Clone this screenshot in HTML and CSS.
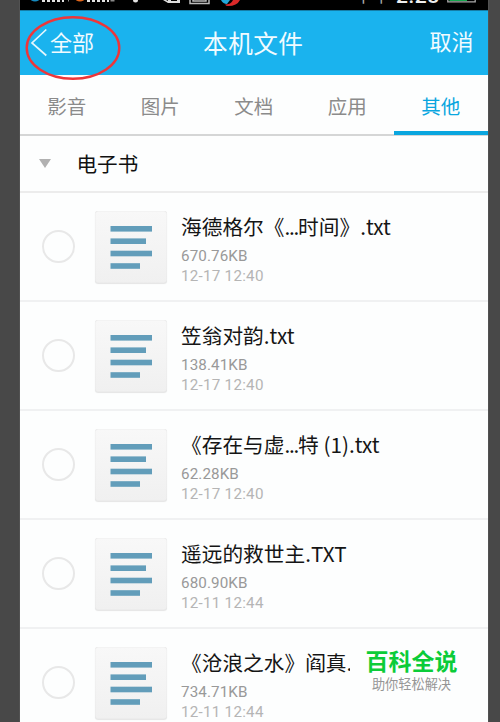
FILE: index.html
```html
<!DOCTYPE html>
<html lang="zh-CN">
<head>
<meta charset="utf-8">
<title>本机文件</title>
<link rel="stylesheet" href="styles.css">
</head>
<body>
<svg class="defs" width="0" height="0" aria-hidden="true">
  <symbol id="doc" viewBox="0 0 72 72">
    <g fill="#629dba"><rect x="15.500" y="15" width="41.500" height="5.600"/><rect x="15.500" y="27.400" width="35.500" height="5.600"/><rect x="15.500" y="39.700" width="41.500" height="5.600"/><rect x="15.500" y="52.200" width="29.500" height="5.600"/></g>
  </symbol>
</svg>
<main class="phone">
  <div class="status">
    <svg class="status-icons" width="230" height="10" viewBox="20 0 230 10">
      <ellipse cx="35" cy="-2" rx="5" ry="3.600" fill="#168ac0"/>
      <ellipse cx="80" cy="-2" rx="5" ry="3.600" fill="#e2661b"/>
      <g fill="#e4e4e4"><path d="M42 0h3v2h-3zM47 0h3v2h-3zM52 0h3v2h-3zM57 0h3v2h-3zM62 0h2v2h-2zM87 0h3v2h-3zM92 0h3v2h-3zM97 0h3v2h-3zM102 0h3v2h-3zM107 0h2v2h-2z"/><path d="M68 0h1v1.500h-1zM110.500 0h4v1.600h-4z" fill="#888"/><circle cx="135.500" cy="0" r="2.500"/></g>
      <path d="M163 0l5 3h12V0h-3v1h-6V0h-3v1l-2-1z" fill="#ddd"/>
      <path d="M190 0v3.500h19V0M193 0v1h13V0" fill="none" stroke="#bbb" stroke-width="1.500"/>
      <path d="M221 0h9l-3 4q-4 0-6-4z" fill="#23a8da"/>
      <path d="M233 0h7q-3 6-12 6-2 0-3-1.500 6 0 8-4.500z" fill="#db2929"/>
    </svg>
    <span class="meridiem">下午</span><span class="time">2:28</span>
    <svg class="battery" width="30" height="10" viewBox="0 0 30 10"><path d="M.8 0v1.800h27.400V0" fill="none" stroke="#aaa" stroke-width="1.300"/><path d="M2.500 0h17.500v1h-17.500z" fill="#12a64c"/></svg>
  </div>
  <header class="bar">
    <div class="back"><svg width="18" height="30" viewBox="0 0 18 30"><path d="M16.300 1.500L2 15l14.300 12.500" fill="none" stroke="#e4f6fd" stroke-width="1.700"/></svg><span>全部</span></div>
    <h1>本机文件</h1>
    <span class="cancel">取消</span>
    <svg class="ring" width="98" height="66" viewBox="0 0 98 66"><ellipse cx="49" cy="33" rx="46.300" ry="30.800" fill="none" stroke="#ee3639" stroke-width="2.400"/></svg>
  </header>
  <nav class="tabs"><span>影音</span><span>图片</span><span>文档</span><span>应用</span><span class="active">其他</span></nav>
  <div class="section"><i class="caret"></i><span>电子书</span></div>
  <ul class="files">
    <li><i class="radio"></i><svg class="doc"><use href="#doc"/></svg><div class="info"><b>海德格尔《<i class="dots">...</i>时间》.txt</b><span class="size">670.76KB</span><time>12-17 12:40</time></div></li>
    <li><i class="radio"></i><svg class="doc"><use href="#doc"/></svg><div class="info"><b>笠翁对韵.txt</b><span class="size">138.41KB</span><time>12-17 12:40</time></div></li>
    <li><i class="radio"></i><svg class="doc"><use href="#doc"/></svg><div class="info"><b>《存在与虚<i class="dots">...</i>特 (1).txt</b><span class="size">62.28KB</span><time>12-17 12:40</time></div></li>
    <li><i class="radio"></i><svg class="doc"><use href="#doc"/></svg><div class="info"><b>遥远的救世主.TXT</b><span class="size">680.90KB</span><time>12-11 12:44</time></div></li>
    <li><i class="radio"></i><svg class="doc"><use href="#doc"/></svg><div class="info"><b>《沧浪之水》阎真.</b><span class="size">734.71KB</span><time>12-11 12:44</time></div></li>
  </ul>
  <aside class="mark"><strong>百科全说</strong><span>助你轻松解决</span></aside>
</main>
</body>
</html>
```

FILE: styles.css
```css
* { box-sizing: border-box; }
body {
  margin: 0;
  height: 722px;
  overflow: hidden;
  background: #484848;
  font-family: Roboto, "Noto Sans CJK SC", sans-serif;
}
.defs { position: absolute; }
.phone {
  position: relative;
  width: 467.5px;
  height: 722px;
  margin-left: 20px;
  overflow: hidden;
  background: #fdfefe;
  box-shadow: 0 0 1px #888;
}
.status {
  display: flex;
  height: 10px;
  overflow: hidden;
  background: #000;
  color: #eee;
}
.status svg { flex: none; }
.meridiem {
  margin-left: 105px;
  margin-top: -17px;
  width: 40px;
  font-size: 17.5px;
  line-height: 26px;
  color: #aaa;
}
.time {
  width: 52px;
  margin-left: 1px;
  margin-top: -16px;
  font-size: 21px;
  line-height: 24px;
  letter-spacing: 0.6px;
  font-weight: 500;
}
.battery { margin-left: -1px; }
.bar {
  position: relative;
  display: grid;
  grid-template-columns: 1fr auto 1fr;
  align-items: center;
  height: 65px;
  padding: 0 14px 0 10px;
  background: #1ab3ee;
  border-top: 1px solid #157da7;
  color: #f1fbff;
}
.back { display: flex; align-items: center; gap: 2px; font-size: 22px; }
.back span { margin-top: -5px; }
.bar h1 { margin: -3px 0 0 3px; font-size: 24.7px; font-weight: 400; letter-spacing: 0.4px; }
.cancel { justify-self: end; font-size: 22px; margin-top: -6px; }
.ring { position: absolute; left: 3.5px; top: 4px; z-index: 2; }
.tabs {
  display: grid;
  grid-template-columns: repeat(5, 1fr);
  height: 61px;
  border-bottom: 2px solid #d5d6d6;
  font-size: 19.5px;
  color: #8b8b8b;
}
.tabs span { line-height: 65px; height: 60px; text-align: center; }
.tabs .active { color: #0aa6df; border-bottom: 4px solid #0aa6df; }
.section {
  display: flex;
  align-items: center;
  gap: 26px;
  height: 57px;
  padding-left: 18.5px;
  border-bottom: 2px solid #ececec;
  font-size: 20.6px;
  color: #111;
}
.section span { margin-top: -2px; }
.caret { border: 6.5px solid transparent; border-top: 9px solid #b1b1b1; border-bottom: 0; }
.files { margin: 0; padding: 0; list-style: none; }
.files li {
  display: flex;
  align-items: flex-start;
  height: 109.1px;
  padding: 18px 0 0 22px;
  border-bottom: 2px solid #f0f1f2;
}
.radio {
  width: 33px;
  height: 33px;
  margin: 19px 20px 0 0;
  border: 2px solid #e8e8e8;
  border-radius: 50%;
}
.doc {
  width: 72px;
  height: 72px;
  margin-right: 14px;
  border-radius: 3px;
  background: linear-gradient(#f8f8f8, #f0f0f0);
  box-shadow: inset 0 0 1px #ccc, 0 1px 1px #e5e5e5;
}
.info { display: flex; flex-direction: column; white-space: nowrap; }
.info b { font: 400 20.7px/30px "Noto Sans CJK SC", sans-serif; color: #151515; height: 35px; }
.dots { font-style: normal; letter-spacing: -1.2px; }
.size, .info time { font-size: 15.2px; line-height: 20px; letter-spacing: 0.1px; }
.size { color: #999; }
.info time { color: #b5b5b5; letter-spacing: 0.25px; }
.mark {
  position: absolute;
  left: 330px;
  top: 643px;
  width: 123px;
  height: 56px;
  display: flex;
  flex-direction: column;
  align-items: center;
  background: #fdfefe;
}
.mark strong { font-size: 23px; line-height: 39px; font-weight: 700; color: #0bcc38; }
.mark span { font-size: 13.2px; line-height: 6px; color: #969696; }
```
